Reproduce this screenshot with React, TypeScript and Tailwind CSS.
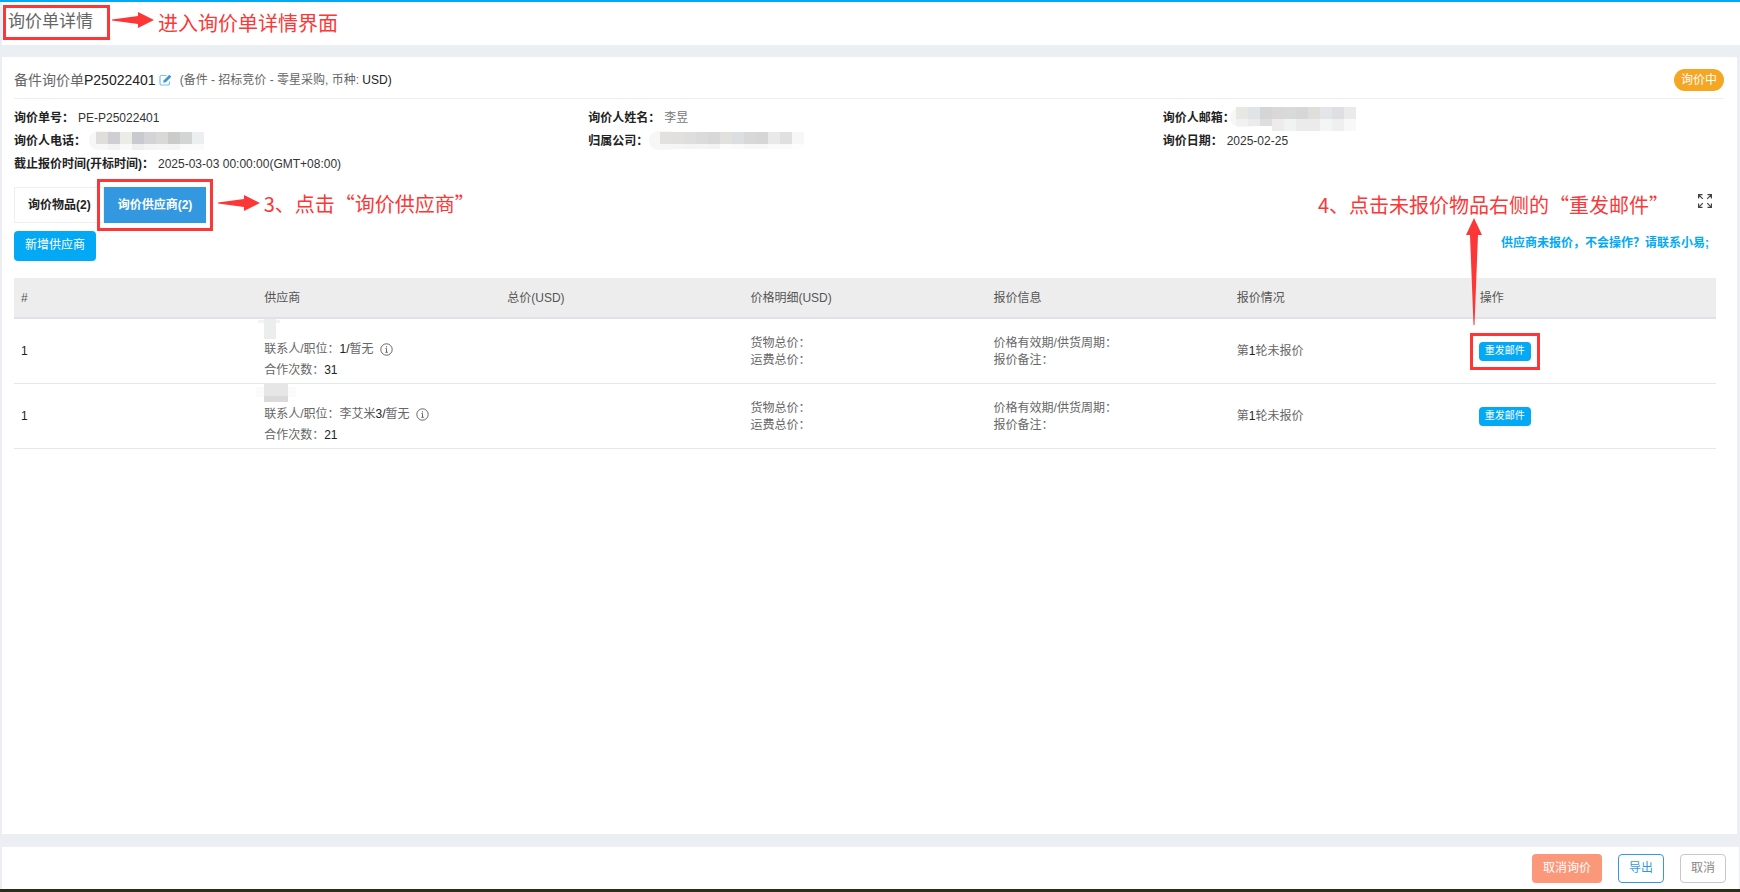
import React from 'react';

interface Block {
  x: number;
  y: number;
  w: number;
  h: number;
  fill: string;
}

interface Supplier {
  id: string;
  contact: React.ReactNode;
  cooperation: number;
  mask: Block[];
}

function row(x: number, y: number, h: number, fills: string[]): Block[] {
  return fills.map((fill, i) => ({ x: x + i * 12, y, w: 12, h, fill }));
}

const phoneMask: Block[] = [
  ...row(6, 1, 12, ['#e0deda', '#cfced5', '#ecece7', '#c9cacf', '#d4d4d6', '#dad9d7', '#cbcbcb', '#d2d5d4', '#ebefef']),
  ...row(6, 13, 6, ['#f8f8f8', '#f3f3f4', '#fafafa', '#f0f0f1', '#f5f5f5', '#f6f6f6', '#f5f5f5', '#fbfbfb', '#fafcfc']),
];

const companyMask: Block[] = [
  ...row(8, 1, 12, ['#e2e1df', '#e1e0df', '#dedede', '#dbdbdb', '#d8d8d8', '#e2e1de', '#dbdfe2', '#dad8d6', '#d6d6d6', '#e9e9e9', '#e0e0e0', '#f7f7f7']),
  ...row(8, 13, 5, ['#f6f6f6', '#f5f5f5', '#f4f4f4', '#f5f5f5', '#f3f3f3', '#fcfcfa', '#f9fafb', '#f7f7f7', '#f7f7f7', '#fafafa', '#fafafa', '#fcfefe']),
];

const emailMask: Block[] = [
  ...row(-3, -1, 12, ['#e7e8e3', '#e0e4e6', '#d5d5d6', '#d9d7d7', '#d8dad9', '#d7d7d8', '#dfdeda', '#e2e6ea', '#dfdfe1', '#e9eaeb']),
  ...row(-3, 11, 7, ['#f0f1f0', '#eaecec', '#dedede']),
  ...row(33, 11, 12, ['#eeeceb', '#f1f3f3', '#ebebeb', '#ecebe9', '#f4f6f6', '#efeff0', '#f8f8f8']),
];

const suppliers: Supplier[] = [
  {
    id: 'a',
    contact: <><Strong>1/</Strong>暂无</>,
    cooperation: 31,
    mask: [
      { x: -6, y: 1, w: 22, h: 3, fill: '#f3f3f3' },
      { x: 0, y: 0, w: 12, h: 20, fill: '#eceded' },
    ],
  },
  {
    id: 'b',
    contact: <>李艾米<Strong>3/</Strong>暂无</>,
    cooperation: 21,
    mask: [
      { x: -8, y: 3, w: 40, h: 10, fill: '#fafbfb' },
      { x: 0, y: 0, w: 24, h: 12, fill: '#e7e6e7' },
      { x: 0, y: 12, w: 24, h: 6, fill: '#dcd9da' },
    ],
  },
];

const columns = ['#', '供应商', '总价(USD)', '价格明细(USD)', '报价信息', '报价情况', '操作'];

function Strong({ children }: { children: React.ReactNode }) {
  return <span className="text-[#222]">{children}</span>;
}

function Mask({ blocks, tail, width }: { blocks: Block[]; tail?: number; width: number }) {
  return (
    <svg width={width} height="20" className="block shrink-0 overflow-visible" aria-hidden="true">
      {tail !== undefined && <rect x={tail} y="0" width="30" height="19" rx="9" fill="#f7f7f8" />}
      {blocks.map((b) => (
        <rect key={`${b.x}-${b.y}`} x={b.x} y={b.y} width={b.w} height={b.h} fill={b.fill} />
      ))}
    </svg>
  );
}

function EditIcon() {
  return (
    <svg width="13" height="12" viewBox="0 0 13 12" fill="none" aria-hidden="true">
      <path d="M7.500 1.500H2.400A1.400 1.400 0 0 0 1 2.900v6.700A1.400 1.400 0 0 0 2.400 11h6.700a1.400 1.400 0 0 0 1.400-1.400V7.500" stroke="#7dbdf0" strokeWidth="1.2" />
      <path d="M10.300.7 12.300 2.700 6.800 8.200l-2.600.6.6-2.600z" fill="#3498e0" />
    </svg>
  );
}

function InfoIcon() {
  return (
    <svg width="13" height="13" viewBox="0 0 13 13" fill="none" stroke="#666" aria-hidden="true">
      <circle cx="6.5" cy="6.5" r="5.7" />
      <path d="M6.500 3.200v1.200M5.500 5.500h1v3.500M5.300 9.300h2.500" />
    </svg>
  );
}

function ExpandIcon() {
  return (
    <svg width="14" height="14" viewBox="0 0 14 14" fill="none" stroke="#444" strokeWidth="1.2" aria-hidden="true">
      <path d="M.6 4.500V.6h3.900M.6.6l4.200 4.200M9.500.6h3.900v3.900M13.400.6 9.200 4.800M.6 9.500v3.900h3.900M.6 13.400l4.200-4.200M9.500 13.400h3.900V9.500M13.400 13.400 9.200 9.200" />
    </svg>
  );
}

function ArrowRight({ className }: { className: string }) {
  return (
    <svg width="42" height="16" viewBox="0 0 42 16" fill="#fd3737" className={className} aria-hidden="true">
      <path d="M0 7.500 26 4V0l16 8-16 8v-4L0 8.500z" />
    </svg>
  );
}

function Field({ label, children }: { label: string; children: React.ReactNode }) {
  return (
    <div className="flex h-[23px] items-center gap-1 whitespace-nowrap">
      <dt className="font-bold text-[#222]">{label}</dt>
      <dd className="text-[#333]">{children}</dd>
    </div>
  );
}

const noteText = "whitespace-nowrap font-['Noto_Sans_CJK_SC',sans-serif] text-[20px] leading-6 text-[#fd3737]";

export default function App() {
  return (
    <div
      lang="zh-CN"
      className="flex min-h-screen flex-col border-t-2 border-[#03a9f4] bg-[#ebeff4] pl-0.5 font-['Liberation_Sans','Noto_Sans_CJK_SC',sans-serif] text-xs text-[#666]"
    >
      <header className="relative flex h-[43px] items-start bg-white pt-2 pl-1.5">
        <h1 className="text-[17px] leading-6">询价单详情</h1>
        <div className="pointer-events-none absolute top-[3px] left-px h-[35px] w-[107px] border-3 border-[#fd3737]" />
        <ArrowRight className="absolute top-2.5 left-[110px]" />
        <p className={`absolute top-[9px] left-[156px] ${noteText}`}>进入询价单详情界面</p>
      </header>

      <main className="mt-3 mr-[3px] flex-1 bg-white pl-3">
        <div className="mr-[13px] flex h-[42px] items-center border-b border-[#eee] pt-1">
          <h2 className="text-sm">备件询价单<Strong>P25022401</Strong></h2>
          <button type="button" aria-label="编辑" className="ml-[3px]">
            <EditIcon />
          </button>
          <span className="ml-2">(备件 - 招标竞价 - 零星采购, 币种: <Strong>USD)</Strong></span>
          <span className="ml-auto flex h-[22px] items-center rounded-full bg-[#f5a623] px-[7px] text-white">询价中</span>
        </div>

        <dl className="mt-[7px] grid grid-cols-3">
          <Field label="询价单号：">PE-P25022401</Field>
          <Field label="询价人姓名："><span className="text-[#777]">李昱</span></Field>
          <Field label="询价人邮箱："><Mask blocks={emailMask} tail={-9} width={118} /></Field>
          <Field label="询价人电话："><Mask blocks={phoneMask} tail={-1} width={114} /></Field>
          <Field label="归属公司："><Mask blocks={companyMask} tail={-3} width={152} /></Field>
          <Field label="询价日期：">2025-02-25</Field>
          <Field label="截止报价时间(开标时间)：">2025-03-03 00:00:00(GMT+08:00)</Field>
        </dl>

        <div className="mt-3 flex h-9 items-center">
          <div role="tablist" className="flex h-full font-bold">
            <button type="button" role="tab" aria-selected="false" className="border border-[#eee] pr-3 pl-[13px] text-[#222]">
              询价物品(2)
            </button>
            <div className="relative">
              <button type="button" role="tab" aria-selected="true" className="h-full bg-[#3498e0] px-3.5 text-white">
                询价供应商(2)
              </button>
              <div className="pointer-events-none absolute -inset-x-[7px] -inset-y-2 border-3 border-[#fd3737]" />
              <ArrowRight className="absolute top-2 left-[114px]" />
              <p className={`absolute top-[5px] left-40 font-normal ${noteText}`}>3、点击“询价供应商”</p>
            </div>
          </div>
          <p className={`ml-auto ${noteText}`}>4、点击未报价物品右侧的“重发邮件”</p>
          <button type="button" aria-label="全屏" className="mt-[7px] mr-[25px] ml-[29px] self-start">
            <ExpandIcon />
          </button>
        </div>

        <div className="mt-2 mr-7 flex items-start justify-between">
          <button type="button" className="h-[30px] rounded bg-[#03a9f4] px-[11px] pb-0.5 text-white">新增供应商</button>
          <a href="#contact" className="font-bold leading-6 text-[#03a9f4]">供应商未报价，不会操作？请联系小易;</a>
        </div>

        <div className="mt-[17px] mr-[21px]">
          <table className="w-full table-fixed border-collapse text-left">
            <thead>
              <tr className="h-10 border-b-2 border-[#dfe3e7] bg-[#ededed]">
                {columns.map((column) => (
                  <th key={column} scope="col" className="px-[7px] font-normal text-[#555]">{column}</th>
                ))}
              </tr>
            </thead>
            <tbody>
              {suppliers.map((supplier, index) => (
                <tr key={supplier.id} className="border-b border-[#e5e8eb]">
                  <td className="px-[7px] text-[#222]">1</td>
                  <td className="px-[7px] pb-0.5 leading-[21px]">
                    <Mask blocks={supplier.mask} width={24} />
                    <div className="flex items-center">
                      <span>联系人/职位：{supplier.contact}</span>
                      <span className="ml-1.5"><InfoIcon /></span>
                    </div>
                    <div>合作次数：<Strong>{supplier.cooperation}</Strong></div>
                  </td>
                  <td />
                  <td className="px-[7px] pt-0.5 leading-[17px]">
                    <div>货物总价：</div>
                    <div>运费总价：</div>
                  </td>
                  <td className="px-[7px] pt-0.5 leading-[17px]">
                    <div>价格有效期/供货周期：</div>
                    <div>报价备注：</div>
                  </td>
                  <td className="px-[7px]">第<Strong>1</Strong>轮未报价</td>
                  <td className="px-1.5">
                    <div className="relative w-fit">
                      <button type="button" className="block h-[19px] rounded bg-[#03a9f4] px-1.5 text-[10px] text-white">
                        重发邮件
                      </button>
                      {index === 0 && (
                        <>
                          <div className="pointer-events-none absolute -inset-[9px] border-3 border-[#fd3737]" />
                          <svg width="16" height="107" viewBox="0 0 16 107" fill="#fd3737" className="absolute bottom-9 -left-[13px]" aria-hidden="true">
                            <path d="M8 0l8 17h-4L8.500 107h-1L4 17H0z" />
                          </svg>
                        </>
                      )}
                    </div>
                  </td>
                </tr>
              ))}
            </tbody>
          </table>
        </div>
      </main>

      <footer className="mt-[13px] mr-px flex h-[42px] items-center justify-end gap-4 bg-white pr-[13px]">
        <button type="button" className="h-[29px] rounded bg-[#fb987a] px-[11px] text-white">取消询价</button>
        <button type="button" className="h-[29px] rounded border border-[#3498e0] px-2.5 text-[#3498e0]">导出</button>
        <button type="button" className="h-[29px] rounded border border-[#c8c8c8] px-2.5 text-[#888]">取消</button>
      </footer>
      <div className="-ml-0.5 h-[3px] bg-[#2a2d18]" />
    </div>
  );
}
